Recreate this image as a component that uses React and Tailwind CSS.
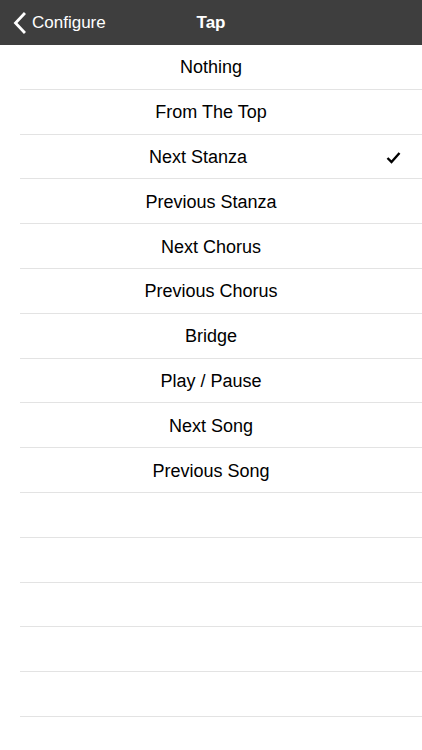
const OPTIONS = [
  'Nothing',
  'From The Top',
  'Next Stanza',
  'Previous Stanza',
  'Next Chorus',
  'Previous Chorus',
  'Bridge',
  'Play / Pause',
  'Next Song',
  'Previous Song',
]

const SELECTED = 'Next Stanza'

export default function App() {
  const rows = [...OPTIONS, '', '', '', '', '']
  return (
    <div className="h-[750px] w-[422px] overflow-hidden bg-white font-['Liberation_Sans',Arial,sans-serif]">
      <header className="relative flex h-[45px] items-center justify-center bg-[#3e3e3e] text-white">
        <button className="absolute left-[12px] top-0 flex h-full items-center gap-[5px] text-[17px]">
          <svg width="15" height="22" viewBox="0 0 15 22" fill="none">
            <path d="M12 2 L3.5 11 L12 20" stroke="white" strokeWidth="2.8" strokeLinecap="square" />
          </svg>
          <span>Configure</span>
        </button>
        <h1 className="text-[17px] font-bold">Tap</h1>
      </header>
      <ul>
        {rows.map((label, i) => {
          const selected = label === SELECTED
          return (
            <li key={i} className="pl-5">
              {/* the checkmark accessory narrows the centred content area */}
              <div
                className={`relative flex h-[44.8px] items-center justify-center border-b border-[#e3e3e3] pt-[2px] text-[18px] text-black ${
                  selected ? 'pr-[46px]' : 'pr-5'
                }`}
              >
                <span>{label}</span>
                {selected && (
                  <svg className="absolute right-[21px]" width="15" height="13" viewBox="0 0 15 13" fill="none">
                    <path d="M1.5 7 L5.5 11 L13.5 2" stroke="black" strokeWidth="2.4" />
                  </svg>
                )}
              </div>
            </li>
          )
        })}
      </ul>
    </div>
  )
}
